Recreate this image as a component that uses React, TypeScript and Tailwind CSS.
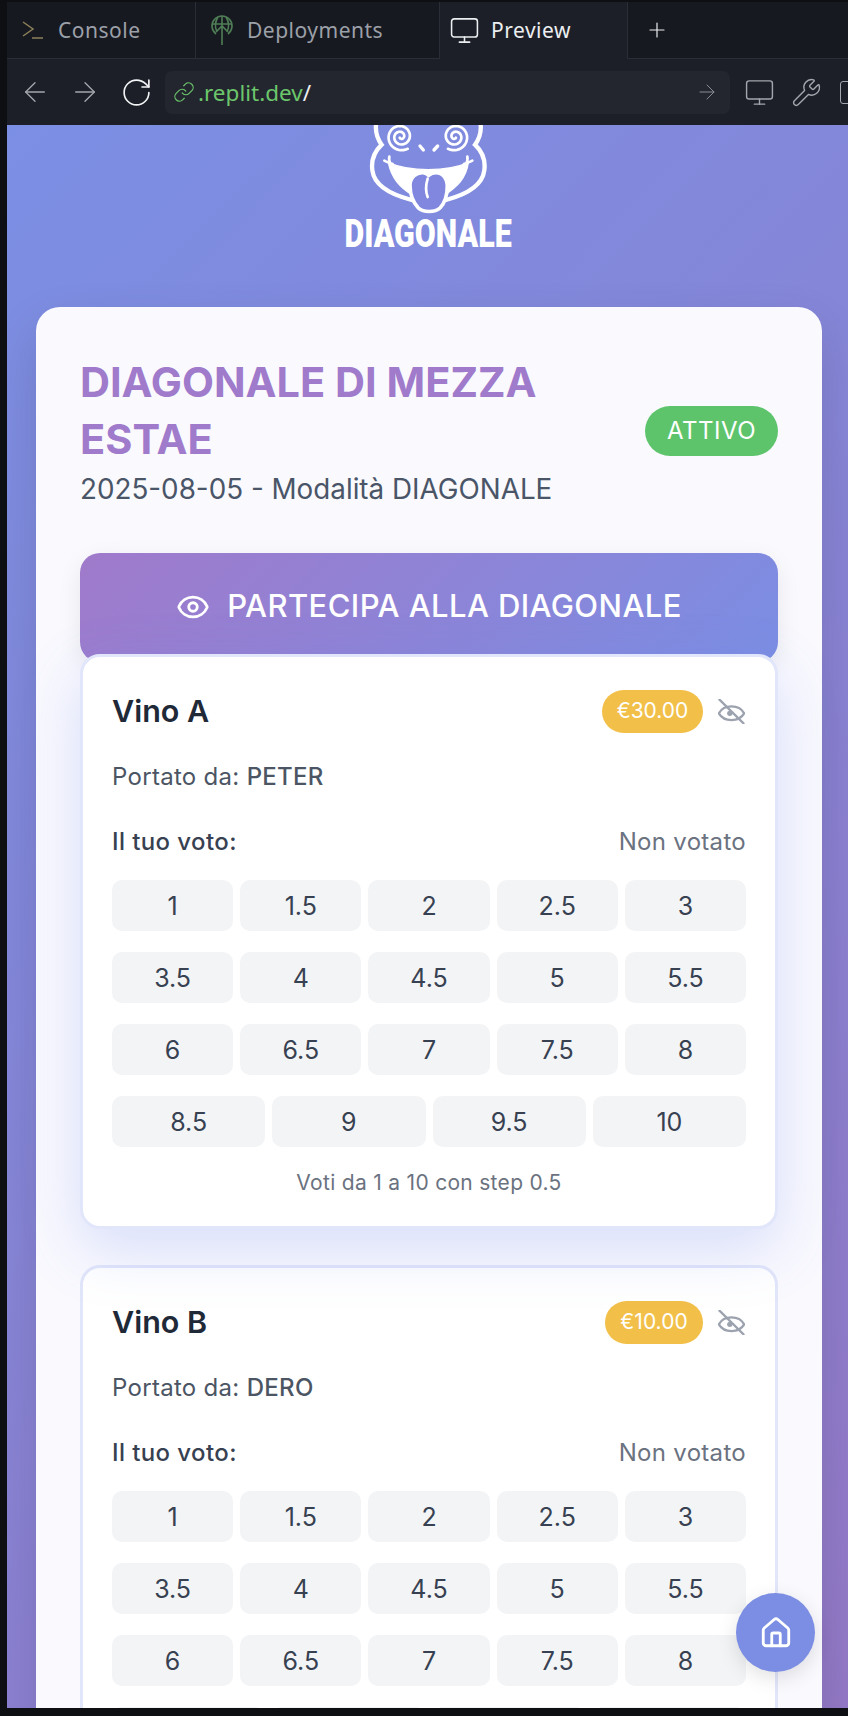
import { ArrowLeft, ArrowRight, RotateCw, Link, Monitor, Wrench, Plus, Eye, House } from 'lucide-react';

const VOTES = ['1', '1.5', '2', '2.5', '3', '3.5', '4', '4.5', '5', '5.5', '6', '6.5', '7', '7.5', '8', '8.5', '9', '9.5', '10'];

// spiral eye of the logo, inside out
function spiralPath(cx: number, cy: number, dir: number) {
  const pts: string[] = [];
  for (let i = 0; i <= 80; i++) {
    const t = i / 80;
    const angle = (Math.PI / 3 + (1 - t) * Math.PI * 2 * 2.2);
    const r = 4 + 38 * t;
    pts.push(`${(cx + dir * r * Math.cos(angle)).toFixed(1)} ${(cy + r * Math.sin(angle)).toFixed(1)}`);
  }
  return 'M' + pts.join(' L');
}

function Logo() {
  return (
    <svg width="136" height="96" viewBox="0 0 408 288" fill="none" className="block">
      {/* head */}
      <path d="M48 8 C46 30 52 50 65 68 C42 90 33 115 37 145 C42 185 80 215 155 234" stroke="white" strokeWidth="13" strokeLinecap="round" />
      <path d="M362 8 C364 30 358 50 345 68 C368 90 377 115 373 145 C368 185 330 215 258 234" stroke="white" strokeWidth="13" strokeLinecap="round" />
      {/* eyes */}
      <path d={spiralPath(122, 44, 1)} stroke="white" strokeWidth="8" strokeLinecap="round" strokeLinejoin="round" />
      <path d={spiralPath(285, 44, -1)} stroke="white" strokeWidth="8" strokeLinecap="round" strokeLinejoin="round" />
      {/* nose */}
      <path d="M180 72 L190 84 M233 72 L222 84" stroke="white" strokeWidth="10" strokeLinecap="round" />
      {/* mouth */}
      <path d="M85 122 C150 150 260 150 325 122 C318 170 290 195 255 218 L155 218 C120 195 95 170 85 122 Z" fill="white" stroke="white" strokeWidth="4" strokeLinejoin="round" />
      <path d="M73 116 C80 120 88 122 98 126 M88 104 C86 112 88 120 92 128 M337 116 C330 120 322 122 312 126 M322 104 C324 112 322 120 318 128" stroke="white" strokeWidth="8" strokeLinecap="round" />
      {/* tongue */}
      <path d="M150 190 C150 165 170 150 190 152 C197 153 202 156 206 160 C212 155 220 152 228 152 C248 152 262 170 262 190 C262 215 258 240 240 258 C225 272 190 272 175 258 C158 240 150 215 150 190 Z" fill="#8187df" stroke="white" strokeWidth="11" />
      <path d="M203 170 C197 190 197 210 203 225" stroke="white" strokeWidth="8" strokeLinecap="round" />
    </svg>
  );
}

function EyeSlash() {
  return (
    <svg width="27" height="25" viewBox="0 0 80 75" fill="none" stroke="#9ca3af" strokeWidth="7" strokeLinecap="round">
      <path d="M2 43 C17 15 63 15 78 43 C63 70 17 70 2 43 Z" />
      <circle cx="35" cy="43" r="8" fill="#9ca3af" stroke="none" />
      <path d="M4 2 L76 73" />
    </svg>
  );
}

function VoteCard({ name, price, by, lifted, priceWidth }: { name: string; price: string; by: string; lifted?: boolean; priceWidth: string }) {
  return (
    <div className={`h-[575px] rounded-[20px] border-[3px] border-[#e2e6fa] bg-white px-[29px] pt-[32px] ${lifted ? 'relative z-10 -mt-2 shadow-[0_20px_60px_rgba(102,126,234,0.22)]' : 'mt-[36px]'}`}>
      <div className="flex items-center justify-between">
        <h3 className="text-[30.5px] leading-[44px] font-semibold text-[#1f2937]">{name}</h3>
        <div className="mr-px flex items-center gap-[15px]">
          <span className={`${priceWidth} flex h-[43px] items-center justify-center rounded-full bg-[#f2c049] text-[21px] text-white`}>{price}</span>
          <EyeSlash />
        </div>
      </div>
      <p className="mt-[28px] text-[24px] leading-[32px] tracking-[0.3px] text-[#4b5563]">
        Portato da: <span className="font-medium">{by}</span>
      </p>
      <div className="mt-[33px] flex items-center justify-between text-[24px] leading-[32px] tracking-[0.3px]">
        <span className="font-medium tracking-[0.4px] text-[#374151]">Il tuo voto:</span>
        <span className="text-[#6b7280]">Non votato</span>
      </div>
      <div className="mt-[22px] flex flex-wrap gap-x-[7px] gap-y-[21px]">
        {VOTES.map((v) => (
          <button key={v} className="flex h-[51px] flex-1 basis-[120px] items-center justify-center rounded-[10px] bg-[#f3f4f6] pt-[2px] text-[25px] text-[#374151]">
            {v}
          </button>
        ))}
      </div>
      <p className="mt-[22px] text-center text-[21px] leading-[28px] tracking-[0.3px] text-[#6b7280]">Voti da 1 a 10 con step 0.5</p>
    </div>
  );
}

export default function App() {
  return (
    <div className="flex h-[1716px] w-[848px] flex-col overflow-hidden bg-[#0e0f13] pt-[2px] pb-[8px] pl-[7px] font-['Inter',sans-serif]">
      {/* tabs */}
      <div className="flex h-[57px] shrink-0 bg-[#171921] font-['Noto_Sans',sans-serif] text-[21px] tracking-[0.5px]">
        <div className="flex w-[189px] items-center gap-[14px] border-r border-b border-[#2a2d36] pl-[15px] text-[#9ca0a8]">
          <svg width="22" height="20" viewBox="0 0 22 20" fill="none" stroke="#8b8158" strokeWidth="1.5">
            <path d="M1 2 L11 9 L1 16" />
            <path d="M10 18 H21" />
          </svg>
          <span className="pt-px">Console</span>
        </div>
        <div className="flex w-[244px] items-center gap-[13px] border-r border-b border-[#2a2d36] pl-[14px] text-[#9ca0a8]">
          <svg width="24" height="30" viewBox="0 0 24 30" fill="none" stroke="#4f7d55" strokeWidth="1.6">
            <path d="M6 19 A10 10 0 1 1 18 19" />
            <path d="M2 9 H22 M12 1 V30 M6 17 L12 11 L18 17 M8 2 C5 7 5 13 7 17 M16 2 C19 7 19 13 17 17" />
          </svg>
          <span className="pt-px">Deployments</span>
        </div>
        <div className="flex w-[188px] items-center gap-[11px] border-r border-[#2a2d36] bg-[#1c1f27] pl-[9px] text-[#eceef1]">
          <Monitor size={31} strokeWidth={1.2} />
          <span className="pt-px">Preview</span>
        </div>
        <div className="flex flex-1 items-center border-b border-[#2a2d36] pl-[17px] text-[#eceef1]">
          <Plus size={24} strokeWidth={1.2} />
        </div>
      </div>
      {/* toolbar */}
      <div className="flex h-[66px] shrink-0 items-center bg-[#1c1f27] pl-[12px]">
        <ArrowLeft size={32} strokeWidth={1} className="shrink-0 text-[#a3a6ad]" />
        <ArrowRight size={32} strokeWidth={1} className="ml-[18px] shrink-0 text-[#a3a6ad]" />
        <RotateCw size={33} strokeWidth={1.2} className="ml-[19px] shrink-0 text-[#f2f3f5]" />
        <div className="ml-[12px] flex h-[43px] w-[565px] shrink-0 items-center rounded-[7px] bg-[#23262e] pl-[8px] font-['Noto_Sans',sans-serif] text-[22.5px] text-[#6cc66c]">
          <Link size={22} strokeWidth={1.3} className="shrink-0" />
          <span className="ml-[3px] pt-[2px]">.replit.dev</span>
          <span className="pt-[2px] text-[#eceef1]">/</span>
          <ArrowRight size={24} strokeWidth={1} className="mr-[11px] ml-auto text-[#8a8d94]" />
        </div>
        <Monitor size={31} strokeWidth={1.1} className="ml-[14px] shrink-0 text-[#a3a6ad]" />
        <Wrench size={31} strokeWidth={1.1} className="ml-[16px] shrink-0 text-[#a3a6ad]" />
        <div className="ml-[18px] h-[23px] w-[20px] shrink-0 rounded-[3px] border border-[#a3a6ad]" />
      </div>
      {/* preview */}
      <div className="relative min-h-0 flex-1 overflow-hidden bg-[linear-gradient(135deg,#7b8fe4_0%,#9479c7_100%)]">
        <div className="flex flex-col items-center">
          <div className="-mt-[3px] ml-px">
            <Logo />
          </div>
          <div className="-mt-[3px] ml-[2px] scale-x-[0.78] font-['Roboto',sans-serif] text-[39px] leading-[38px] font-black text-white">DIAGONALE</div>
        </div>
        <div className="mt-[54px] mr-[26px] ml-[29px] rounded-[24px] bg-[#f9f9fe] px-[44px] pt-[47px] shadow-[0_20px_50px_rgba(0,0,0,0.12)]">
          <div className="flex items-center justify-between">
            <div>
              <h1 className="w-[500px] text-[41.5px] leading-[57px] font-bold text-[#a07acb]">DIAGONALE DI MEZZA ESTAE</h1>
              <p className="mt-[2px] text-[27.8px] leading-[38px] text-[#4a5568]">2025-08-05 - Modalità DIAGONALE</p>
            </div>
            <span className="flex h-[50px] w-[133px] items-center justify-center rounded-full bg-[#5ec46c] text-[24px] tracking-[0.5px] text-white">ATTIVO</span>
          </div>
          <button className="mt-[45px] flex h-[109px] w-full items-center justify-center gap-[17px] rounded-[20px] bg-[linear-gradient(135deg,#a07acb,#7b8ee3)] pb-[2px] text-[31px] font-medium tracking-[0.4px] text-white shadow-[0_8px_24px_rgba(0,0,0,0.08)]">
            <Eye size={34} strokeWidth={2} />
            PARTECIPA ALLA DIAGONALE
          </button>
          <VoteCard name="Vino A" price="€30.00" by="PETER" lifted priceWidth="w-[101px]" />
          <VoteCard name="Vino B" price="€10.00" by="DERO" priceWidth="w-[98px]" />
        </div>
        <button className="absolute top-[1468px] left-[729px] flex h-[79px] w-[79px] items-center justify-center rounded-full bg-[#7b8ee3] text-white shadow-[0_6px_20px_rgba(0,0,0,0.12)]">
          <House size={34} strokeWidth={2} />
        </button>
      </div>
    </div>
  );
}
